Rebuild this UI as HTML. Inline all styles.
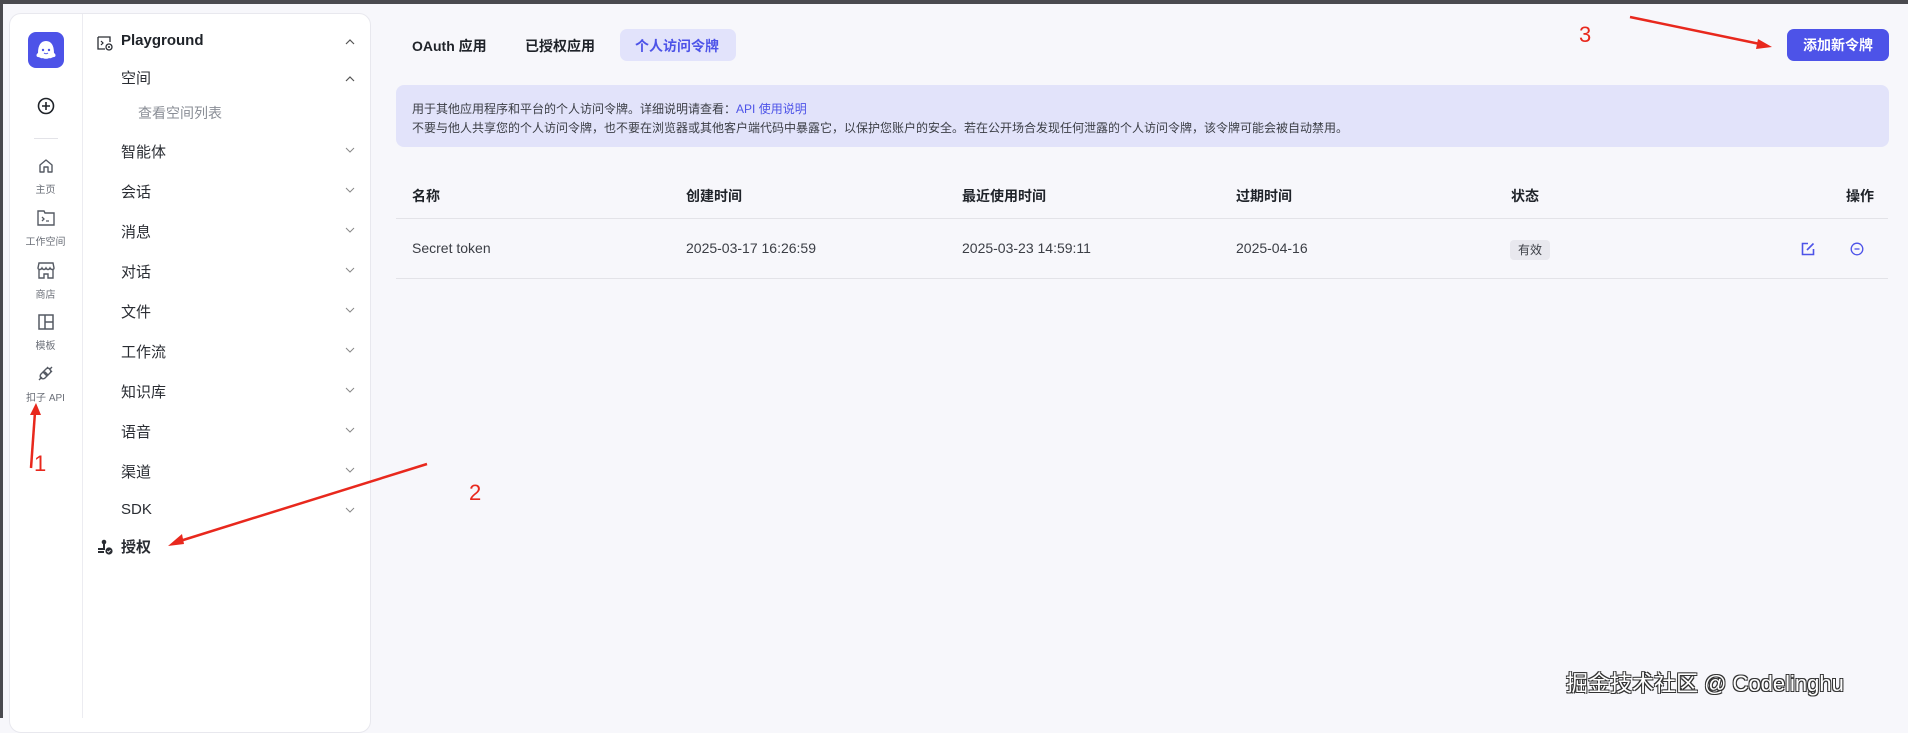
<!DOCTYPE html>
<html><head><meta charset="utf-8"><style>
*{box-sizing:border-box;margin:0;padding:0}
body{width:1908px;height:718px;overflow:hidden;background:#f7f7fb;font-family:"Liberation Sans","Noto Sans CJK SC",sans-serif;color:#1f2329;position:relative}
.a{position:absolute;white-space:nowrap}
.topbar{left:0;top:0;width:1908px;height:4px;background:#4a4a4f}
.leftbar{left:0;top:0;width:3px;height:718px;background:#4a4a4f}
.card{left:9px;top:13px;width:362px;height:720px;background:#fff;border:1px solid #e8e8ee;border-radius:12px}
.vdiv{left:82px;top:14px;width:1px;height:704px;background:#ececf1}
.lbl{font-size:10px;color:#6b6f78;width:73px;text-align:center;left:9px}
.nav{font-size:15px;color:#2a2d33;left:121px}
.chev{left:345px;width:10px;height:10px}
.tab{font-size:14px;font-weight:700;top:36px}
.th{font-size:14px;font-weight:700;top:186px;color:#1f2329}
.td{font-size:14px;top:240px;color:#3b3e45}
.red{color:#e8281d;font-size:22px}
</style></head><body>
<div class="a topbar"></div><div class="a leftbar"></div>
<div class="a card"></div>
<div class="a vdiv"></div>
<!-- logo -->
<div class="a" style="left:28px;top:32px;width:36px;height:36px;background:#4d53e8;border-radius:8px"></div>
<svg class="a" style="left:28px;top:32px" width="36" height="36" viewBox="0 0 36 36"><path d="M10 25c-2 0-2-3 0-4 0-8 3-12 8-12s8 4 8 12c2 1 2 4 0 4-2 0-3 2-5 1-1 1-5 1-6 0-2 1-3-1-5-1z" fill="#fff"/><circle cx="15" cy="18" r="1.2" fill="#4d53e8"/><circle cx="21" cy="18" r="1.2" fill="#4d53e8"/><path d="M16 21q2 1.5 4 0" stroke="#4d53e8" stroke-width="1" fill="none"/></svg>
<svg class="a" style="left:37px;top:97px" width="18" height="18" viewBox="0 0 18 18"><circle cx="9" cy="9" r="7.5" fill="none" stroke="#1f2329" stroke-width="1.6"/><path d="M9 5v8M5 9h8" stroke="#1f2329" stroke-width="1.6"/></svg>
<div class="a" style="left:34px;top:138px;width:24px;height:1px;background:#e3e3e8"></div>
<svg class="a" style="left:38px;top:158px" width="16" height="16" viewBox="0 0 16 16"><path d="M2 7l6-5 6 5v7H10V9H6v5H2z" fill="none" stroke="#555a63" stroke-width="1.4" stroke-linejoin="round"/></svg>
<div class="a lbl" style="top:181px">主页</div>
<svg class="a" style="left:37px;top:210px" width="18" height="16" viewBox="0 0 18 16"><path d="M1 1h6l1 2h9v12H1z" fill="none" stroke="#555a63" stroke-width="1.4"/><path d="M5 7l2 2-2 2M9 11h3" stroke="#555a63" stroke-width="1.3" fill="none"/></svg>
<div class="a lbl" style="top:233px">工作空间</div>
<svg class="a" style="left:37px;top:262px" width="18" height="17" viewBox="0 0 18 17"><path d="M2 1h14l1 5c0 2-3 2-4 0-1 2-3 2-4 0-1 2-3 2-4 0-1 2-4 2-4 0z M2 7v9h5v-4h4v4h5V7" fill="none" stroke="#555a63" stroke-width="1.4"/></svg>
<div class="a lbl" style="top:286px">商店</div>
<svg class="a" style="left:38px;top:314px" width="16" height="16" viewBox="0 0 16 16"><rect x="1" y="1" width="14" height="14" fill="none" stroke="#555a63" stroke-width="1.5"/><path d="M7 1v14M7 8h8" stroke="#555a63" stroke-width="1.5"/></svg>
<div class="a lbl" style="top:337px">模板</div>
<svg class="a" style="left:37px;top:365px" width="17" height="17" viewBox="0 0 17 17"><path d="M2 15l3-3M6 7l4 4-2 2a2.8 2.8 0 01-4-4zM11 10L7 6l2-2a2.8 2.8 0 014 4zM12 5l3-3M10 3l1-1M14 7l1-1" fill="none" stroke="#555a63" stroke-width="1.4"/></svg>
<div class="a lbl" style="top:389px">扣子 API</div>
<!-- nav -->
<svg class="a" style="left:97px;top:35px" width="16" height="16" viewBox="0 0 16 16"><path d="M1 2h12v5M1 2v12h7" fill="none" stroke="#2a2d33" stroke-width="1.3"/><path d="M4 6l2 2-2 2" stroke="#2a2d33" stroke-width="1.2" fill="none"/><circle cx="12" cy="12" r="3" fill="none" stroke="#2a2d33" stroke-width="1.3"/><circle cx="12" cy="12" r="1" fill="#2a2d33"/></svg>
<div class="a" style="left:121px;top:32px;font-size:15px;font-weight:700;color:#1f2329">Playground</div>
<div class="a nav" style="top:67px">空间</div>
<div class="a" style="left:138px;top:103px;font-size:14px;color:#8a8e96">查看空间列表</div>
<div class="a nav" style="top:141px">智能体</div>
<div class="a nav" style="top:181px">会话</div>
<div class="a nav" style="top:221px">消息</div>
<div class="a nav" style="top:261px">对话</div>
<div class="a nav" style="top:301px">文件</div>
<div class="a nav" style="top:341px">工作流</div>
<div class="a nav" style="top:381px">知识库</div>
<div class="a nav" style="top:421px">语音</div>
<div class="a nav" style="top:461px">渠道</div>
<div class="a nav" style="top:501px;font-family:'Liberation Sans',sans-serif">SDK</div>
<svg class="a" style="left:97px;top:539px" width="16" height="16" viewBox="0 0 16 16"><circle cx="7" cy="3" r="2.3" fill="#2a2d33"/><path d="M6 5h2v4H6zM1 9h7v2H1zM1 12h6v2H1z" fill="#2a2d33"/><circle cx="12" cy="12" r="3.6" fill="#2a2d33"/><path d="M10.3 12l1.2 1.2 2-2" stroke="#fff" stroke-width="1" fill="none"/></svg>
<div class="a nav" style="top:536px;left:121px;font-weight:700">授权</div>
<svg class="a" style="left:345px;top:37px" width="10" height="10"><path d="M1 7l4-4 4 4" stroke="#555" stroke-width="1.2" fill="none"/></svg>
<svg class="a" style="left:345px;top:74px" width="10" height="10"><path d="M1 7l4-4 4 4" stroke="#555" stroke-width="1.2" fill="none"/></svg>
<svg class="a" width="10" height="420" style="left:345px;top:145px"><g stroke="#888" stroke-width="1" fill="none"><path d="M1 3l4 4 4-4"/><path d="M1 43l4 4 4-4"/><path d="M1 83l4 4 4-4"/><path d="M1 123l4 4 4-4"/><path d="M1 163l4 4 4-4"/><path d="M1 203l4 4 4-4"/><path d="M1 243l4 4 4-4"/><path d="M1 283l4 4 4-4"/><path d="M1 323l4 4 4-4"/><path d="M1 363l4 4 4-4"/></g></svg>
<!-- tabs -->
<div class="a tab" style="left:412px">OAuth 应用</div>
<div class="a tab" style="left:525px">已授权应用</div>
<div class="a" style="left:620px;top:29px;width:116px;height:32px;background:#e2e3fb;border-radius:7px"></div>
<div class="a tab" style="left:635px;color:#4d53e8">个人访问令牌</div>
<div class="a" style="left:1787px;top:29px;width:102px;height:32px;background:#4d53e8;border-radius:7px;color:#fff;font-size:14px;font-weight:700;text-align:center;line-height:32px">添加新令牌</div>
<!-- info -->
<div class="a" style="left:396px;top:85px;width:1493px;height:62px;background:#e2e3fa;border-radius:8px"></div>
<div class="a" style="left:412px;top:100px;font-size:12px;color:#3b3e45">用于其他应用程序和平台的个人访问令牌。详细说明请查看：<span style="color:#4d53e8">API 使用说明</span></div>
<div class="a" style="left:412px;top:119px;font-size:12px;color:#3b3e45">不要与他人共享您的个人访问令牌，也不要在浏览器或其他客户端代码中暴露它，以保护您账户的安全。若在公开场合发现任何泄露的个人访问令牌，该令牌可能会被自动禁用。</div>
<!-- table -->
<div class="a th" style="left:412px">名称</div>
<div class="a th" style="left:686px">创建时间</div>
<div class="a th" style="left:962px">最近使用时间</div>
<div class="a th" style="left:1236px">过期时间</div>
<div class="a th" style="left:1511px">状态</div>
<div class="a th" style="left:1846px">操作</div>
<div class="a" style="left:396px;top:218px;width:1492px;height:1px;background:#e3e3e8"></div>
<div class="a td" style="left:412px">Secret token</div>
<div class="a td" style="left:686px">2025-03-17 16:26:59</div>
<div class="a td" style="left:962px">2025-03-23 14:59:11</div>
<div class="a td" style="left:1236px">2025-04-16</div>
<div class="a" style="left:1510px;top:240px;width:40px;height:20px;background:#e8e8ee;border-radius:4px;font-size:12px;color:#3b3e45;text-align:center;line-height:20px">有效</div>
<svg class="a" style="left:1801px;top:242px" width="14" height="14" viewBox="0 0 14 14"><path d="M7 1.5H1.5v11h11V7" fill="none" stroke="#4d53e8" stroke-width="1.6"/><path d="M6 8l6.5-6.5" stroke="#4d53e8" stroke-width="1.6"/></svg>
<svg class="a" style="left:1850px;top:242px" width="14" height="14" viewBox="0 0 14 14"><circle cx="7" cy="7" r="5.8" fill="none" stroke="#4d53e8" stroke-width="1.3"/><path d="M4.5 7h5" stroke="#4d53e8" stroke-width="1.3"/></svg>
<div class="a" style="left:396px;top:278px;width:1492px;height:1px;background:#e3e3e8"></div>
<!-- annotations -->
<svg class="a" style="left:0;top:0" width="1908" height="718">
<path d="M31 468L35 412" stroke="#e8281d" stroke-width="2.5"/><path d="M30 415l6-12 5 12z" fill="#e8281d"/>
<path d="M427 464L180 541" stroke="#e8281d" stroke-width="2.5"/><path d="M168 546l14-12 2 10z" fill="#e8281d"/>
<path d="M1630 17L1760 44" stroke="#e8281d" stroke-width="2.5"/><path d="M1772 47l-14-8-2 10z" fill="#e8281d"/>
</svg>
<div class="a red" style="left:34px;top:451px">1</div>
<div class="a red" style="left:469px;top:480px">2</div>
<div class="a red" style="left:1579px;top:22px">3</div>
<div class="a" style="left:1566px;top:666px;font-size:22px;color:#fff;text-shadow:1px 1px 0 #333,-1px -1px 0 #333,1px -1px 0 #333,-1px 1px 0 #333">掘金技术社区 @ Codelinghu</div>
</body></html>
